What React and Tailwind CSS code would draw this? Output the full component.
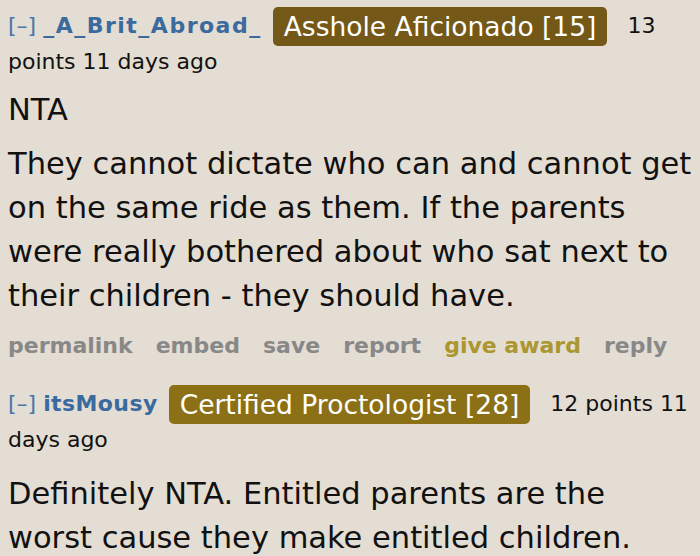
const FONT = { fontFamily: '"DejaVu Sans", Verdana, sans-serif' };

const comments = [
  {
    author: '_A_Brit_Abroad_',
    authorCls: 'tracking-[1.5px]',
    flair: 'Asshole Aficionado [15]',
    flairBg: 'bg-[#745817]',
    meta: '13 points 11 days ago',
    body: ['NTA', 'They cannot dictate who can and cannot get on the same ride as them. If the parents were really bothered about who sat next to their children - they should have.'],
    actions: true,
  },
  {
    author: 'itsMousy',
    authorCls: 'tracking-[0.4px]',
    flair: 'Certified Proctologist [28]',
    flairBg: 'bg-[#8c7016]',
    meta: '12 points 11 days ago',
    body: ['Definitely NTA. Entitled parents are the worst cause they make entitled children.'],
    actions: false,
  },
];

function Comment({ c, first }) {
  return (
    <div className={first ? 'pt-[7px]' : 'pt-[24px]'}>
      <div className="text-[22px] leading-[32px] text-[#111]">
        <span className="text-[#4a76a8]">[–]</span>{' '}
        <span className={`font-bold text-[#3a6a9e] ${c.authorCls}`}>{c.author}</span>
        <span className={`inline-block align-middle ${c.flairBg} text-white text-[26.5px] leading-[39px] px-[11px] rounded-[5px] ml-[11px]`}>
          {c.flair}
        </span>
        <span className="ml-[20px]">{c.meta}</span>
      </div>
      <div className={`${first ? 'mt-[10px]' : 'mt-[16px]'} pr-[5px] text-[30.5px] leading-[44px] text-[#111]`}>
        {c.body.map((p, i) => (
          <p key={i} className={i > 0 ? 'mt-[10px]' : ''}>{p}</p>
        ))}
      </div>
      {c.actions && (
        <div className="mt-[13px] flex gap-[23px] text-[22px] leading-[30px] font-bold text-[#888888]">
          <span>permalink</span>
          <span>embed</span>
          <span>save</span>
          <span>report</span>
          <span className="text-[#ab9630]">give award</span>
          <span>reply</span>
        </div>
      )}
    </div>
  );
}

export default function App() {
  return (
    <div className="w-[700px] h-[556px] overflow-hidden bg-[#e4ddd3] pl-[8px]" style={FONT}>
      {comments.map((c, i) => (
        <Comment key={i} c={c} first={i === 0} />
      ))}
    </div>
  );
}
